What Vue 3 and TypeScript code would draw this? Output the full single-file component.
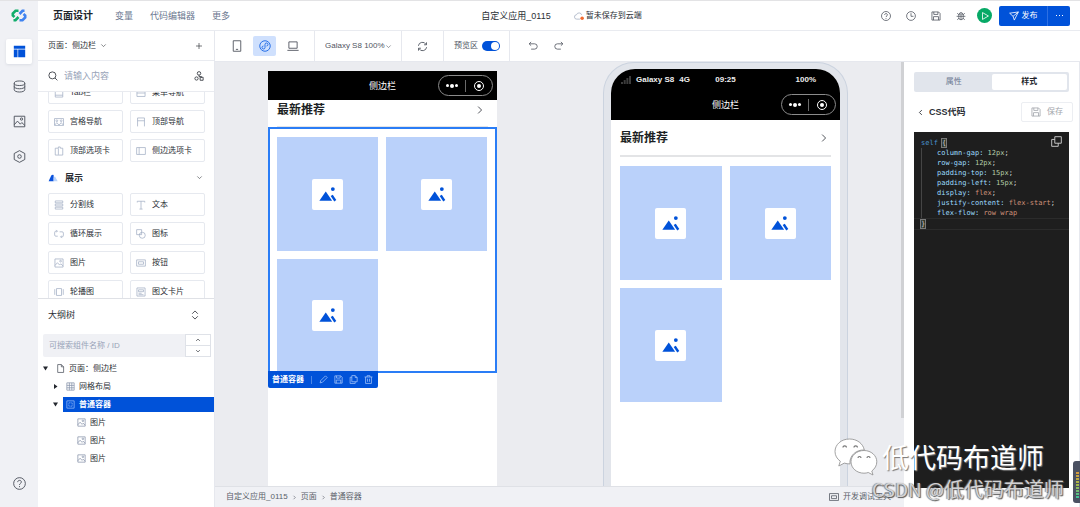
<script setup lang="ts">
import { h, ref } from 'vue'

const icons: Record<string, string> = {
  layout: '<path fill="currentColor" stroke="none" d="M1 1h14v3.6H1zM1 5.400h4.600V15H1zM6.400 5.400H15V15H6.400z"/>',
  database: '<ellipse cx="8" cy="4" rx="6.5" ry="2.8"/><path d="M1.5 4v8c0 1.600 2.900 2.800 6.500 2.800s6.500-1.200 6.500-2.800V4M1.500 8c0 1.600 2.900 2.800 6.500 2.800s6.500-1.200 6.500-2.800"/>',
  image: '<path d="M1.500 1.500h13v13h-13zM1.500 12l4-4.500 3.500 3.800 1.800-2 3.700 3.500"/><circle cx="10.500" cy="5" r="1.400"/>',
  hexagon: '<path d="M8 .8l6.500 3.500v7.400L8 15.200l-6.500-3.500V4.300z"/><circle cx="8" cy="8" r="2.200"/>',
  help: '<circle cx="8" cy="8" r="7.200"/><path d="M5.800 6.300c0-3 4.500-2.800 4.500-.1C10.300 7.800 8 7.900 8 9.700M8 11.200v1.300"/>',
  down: '<path d="M3 5.500l5 5 5-5"/>',
  up: '<path d="M3 10.500l5-5 5 5"/>',
  right: '<path d="M5 2.500L10.500 8 5 13.500"/>',
  left: '<path d="M11 2.500L5.500 8l5.500 5.500"/>',
  plus: '<path d="M8 2v12M2 8h12"/>',
  search: '<circle cx="7" cy="7" r="5.600"/><path d="M11.200 11.200l3.800 3.800"/>',
  nodes: '<circle cx="8" cy="3.800" r="2.800"/><path d="M8 6.600v2.400M8 9h4v1.500"/><circle cx="4" cy="12" r="2.600"/><path d="M9.800 10h4.800v4.800H9.800z"/>',
  tab: '<path d="M2 1.500h12v13H2zM2 11.500h12"/>',
  menu: '<path d="M1.500 2.500h13v11h-13zM1.500 8h13M5 5.200h6"/>',
  grid9: '<path d="M.8 2.500h14.400v11H.8zM1 13l3.500-4L8 13l3.500-4 3.500 4"/><circle cx="4.500" cy="6" r="1.400"/><circle cx="11.500" cy="6" r="1.400"/>',
  topnav: '<path d="M2.500 15V1.500h11V15M2.500 6h11"/>',
  toptabs: '<path d="M2 14.500v-11h5v-2h3v2h4v11zM7 4v10"/>',
  sidetabs: '<path d="M1 2.500h14v11H1zM5 2.500v11"/>',
  lines: '<path d="M2 1.500h12v3H2zM2 6.500h12v3H2zM2 11.500h12v3H2z"/>',
  text: '<path d="M2 4V2h12v2M8 2v12.500M5.500 14.500h5"/>',
  loop: '<path d="M5 3.500H3a2 2 0 0 0-2 2v4a2 2 0 0 0 2 2h3M3.500 1.500l2 2-2 2M11 12.500h2a2 2 0 0 0 2-2v-4a2 2 0 0 0-2-2H9M12.500 10.500l-2 2 2 2"/>',
  shapes: '<path d="M1 1h8v8H1z"/><circle cx="10" cy="10" r="4.800"/>',
  button: '<path d="M1 3h14v10H1zM4 6h8v4H4z"/>',
  carousel: '<path d="M4 2.500h8v11H4zM1.200 3.500v9M14.800 3.500v9"/>',
  card: '<path d="M1.500 1.500h13v13h-13zM4 4.500h8v3H4zM4 10h5M4 12.300h8"/>',
  sort: '<path d="M3.500 6L8 1.500 12.500 6M3.500 10L8 14.500 12.500 10"/>',
  file: '<path d="M3 1h6.500L13.500 5v10H3zM9.500 1v4h4"/>',
  table: '<path d="M1.500 1.500h13v13h-13zM1.500 6h13M1.500 10.300h13M6 1.500v13M10.300 1.500v13"/>',
  container: '<path d="M1.500 1.500h13v13h-13z"/><path stroke-dasharray="2 1" d="M5 5h6v6H5z"/>',
  phone: '<path d="M3 1h10v14H3zM6.500 12.500h3"/>',
  mini: '<circle cx="8" cy="8" r="7"/><path d="M8 10.200a2 2 0 1 1-2-2.200M8 10.200V5.800M8 5.800A2 2 0 1 1 10 8"/>',
  laptop: '<path d="M2.500 2.500h11v8.500h-11zM.5 13.800h15"/>',
  refresh: '<path d="M2 7a6 6 0 0 1 11.200-2M14 9a6 6 0 0 1-11.200 2M13.800 2v3.500h-3.500M2.200 14v-3.500h3.500"/>',
  undo: '<path d="M5 1.500L1.800 4.500 5 7.500M2 4.500h8.500a3.900 3.900 0 0 1 0 8.500H5"/>',
  redo: '<path d="M11 1.500l3.200 3L11 7.500M14 4.500H5.500a3.900 3.900 0 0 0 0 8.500H11"/>',
  clock: '<circle cx="8" cy="8" r="7"/><path d="M8 3.500V8.500h4"/>',
  save: '<path d="M1.500 1.500h10.500l2.500 2.500v10.500h-13zM4.500 1.500V5.500h6.500v-4M4 14.500V9h8v5.500"/>',
  bug: '<path d="M4.500 5h7v5.500a3.500 3.500 0 0 1-7 0zM5.500 5a2.500 2.500 0 0 1 5 0M8 6v8M1 8.500h3.500M11.500 8.500H15M2 3.500L4.500 6M14 3.500L11.500 6M2 14l2.800-2.500M14 14l-2.800-2.500M4.500 8.500h7"/>',
  play: '<path d="M4 2.500l9.500 5.500L4 13.500z"/>',
  send: '<path d="M1 3.500L15 1.500 8.500 14.500 6.500 8.500zM6.500 8.500L15 1.500"/>',
  cloud: '<path d="M9.500 13H4.500a3.500 3.500 0 0 1-.5-7 4.300 4.300 0 0 1 8.300.5"/><circle cx="13" cy="11.500" r="2.800" fill="#f26a2e" stroke="none"/>',
  pen: '<path d="M2 14l1-4 8.500-8.500 3 3L6 13z"/>',
  copy: '<path d="M5 1h6l3.500 3.500V12H5zM11 1v3.500h3.500M5 4H2v11h9v-3"/>',
  trash: '<path d="M1 3.500h14M5.500 3.500V1.200h5v2.300M2.800 3.500V15h10.400V3.500M6.300 6.500v5.500M9.700 6.500v5.500"/>',
  windows: '<path d="M5.500 1H15v9.500H5.500zM5.500 5H1v10h9.500v-4.500"/>',
  devtool: '<path d="M.8 2.500h14.400v11H.8zM4 6h8v4.500H4z"/>',
  picture: '<path fill="currentColor" stroke="none" d="M.3 14L6 5.800 11.700 14z"/><path stroke-width="2.200" d="M11.300 9.200l3.200 4.800"/><circle cx="12.300" cy="3.600" r="1.700" fill="currentColor" stroke="none"/>',
  category: '<path fill="#0a52dc" stroke="none" d="M1 13l4-8.500q1-2 4-1.500v10z"/><path fill="#b9d3fb" stroke="none" d="M9 13V8l2-3 4.500 8z"/>',
}

const Icon = (props: { name: string }) =>
  h('svg', { class: 'icon', viewBox: '0 0 16 16', 'aria-hidden': 'true', innerHTML: icons[props.name] })
Icon.props = ['name']

const topLinks = ['变量', '代码编辑器', '更多']
const headerTools = [
  { icon: 'help', label: '帮助' },
  { icon: 'clock', label: '历史' },
  { icon: 'save', label: '保存' },
  { icon: 'bug', label: '调试' },
]
const navItems = [
  { icon: 'tab', label: 'Tab栏' },
  { icon: 'menu', label: '菜单导航' },
  { icon: 'grid9', label: '宫格导航' },
  { icon: 'topnav', label: '顶部导航' },
  { icon: 'toptabs', label: '顶部选项卡' },
  { icon: 'sidetabs', label: '侧边选项卡' },
]
const displayItems = [
  { icon: 'lines', label: '分割线' },
  { icon: 'text', label: '文本' },
  { icon: 'loop', label: '循环展示' },
  { icon: 'shapes', label: '图标' },
  { icon: 'image', label: '图片' },
  { icon: 'button', label: '按钮' },
  { icon: 'carousel', label: '轮播图' },
  { icon: 'card', label: '图文卡片' },
]
const tree = [
  { icon: 'file', label: '页面：侧边栏', level: 0, caret: 'open' },
  { icon: 'table', label: '网格布局', level: 1, caret: 'closed' },
  { icon: 'container', label: '普通容器', level: 1, caret: 'open' },
  { icon: 'image', label: '图片', level: 2, caret: '' },
  { icon: 'image', label: '图片', level: 2, caret: '' },
  { icon: 'image', label: '图片', level: 2, caret: '' },
]
const selected = ref(2)
const preview = ref(true)
const tab = ref('样式')
const rules = [
  { prop: 'column-gap', value: '12px', kind: 'num', end: ';' },
  { prop: 'row-gap', value: '12px', kind: 'num', end: ';' },
  { prop: 'padding-top', value: '15px', kind: 'num', end: ';' },
  { prop: 'padding-left', value: '15px', kind: 'num', end: ';' },
  { prop: 'display', value: 'flex', kind: 'word', end: ';' },
  { prop: 'justify-content', value: 'flex-start', kind: 'word', end: ';' },
  { prop: 'flex-flow', value: 'row wrap', kind: 'word', end: '' },
]
</script>

<template>
  <div class="app">
    <nav class="rail" aria-label="主导航">
      <svg class="logo" viewBox="0 0 16 13" aria-hidden="true">
        <path fill="none" stroke="#10ad6b" stroke-width="2.600" d="M7.500 1.800H4.500L1.800 4.500v2L3.500 8M2.500 11.200h2L7.500 8" />
        <path fill="none" stroke="#3f83f0" stroke-width="2.600" d="M8.500 11.200h3L14.200 8.500v-2L12.500 5M13.500 1.800h-2L8.500 5" />
      </svg>
      <button class="rail-btn active" aria-label="页面"><Icon name="layout" /></button>
      <button class="rail-btn" aria-label="数据"><Icon name="database" /></button>
      <button class="rail-btn" aria-label="素材"><Icon name="image" /></button>
      <button class="rail-btn" aria-label="设置"><Icon name="hexagon" /></button>
      <button class="rail-btn last" aria-label="帮助"><Icon name="help" /></button>
    </nav>

    <div class="main">
      <header class="topbar">
        <div class="top-left">
          <h1>页面设计</h1>
          <a v-for="l in topLinks" :key="l" href="#">{{ l }}</a>
        </div>
        <div class="top-mid">
          <span class="app-name">自定义应用_0115</span>
          <span class="cloud"><Icon name="cloud" />暂未保存到云端</span>
        </div>
        <div class="top-right">
          <button v-for="t in headerTools" :key="t.icon" class="tool" :aria-label="t.label"><Icon :name="t.icon" /></button>
          <button class="run" aria-label="预览"><Icon name="play" /></button>
          <div class="publish">
            <button class="pub"><Icon name="send" />发布</button>
            <button class="pub-more" aria-label="更多操作"><i></i><i></i><i></i></button>
          </div>
        </div>
      </header>

      <div class="body">
        <aside class="left">
          <div class="page-row">
            <label class="page-pick">
              <select aria-label="当前页面"><option>页面：侧边栏</option></select>
              <Icon name="down" />
            </label>
            <button aria-label="新建页面"><Icon name="plus" /></button>
          </div>
          <div class="search-row">
            <Icon name="search" />
            <input type="text" placeholder="请输入内容" aria-label="搜索组件" />
            <button aria-label="组件分类"><Icon name="nodes" /></button>
          </div>
          <div class="components">
            <div class="items scrolled">
              <button v-for="c in navItems" :key="c.label" class="item"><Icon :name="c.icon" />{{ c.label }}</button>
            </div>
            <button class="group"><Icon name="category" /><span>展示</span><Icon name="down" /></button>
            <div class="items">
              <button v-for="c in displayItems" :key="c.label" class="item"><Icon :name="c.icon" />{{ c.label }}</button>
            </div>
          </div>
          <section class="outline">
            <div class="outline-head">
              <h2>大纲树</h2>
              <button aria-label="展开"><Icon name="sort" /></button>
            </div>
            <div class="outline-search">
              <input type="text" placeholder="可搜索组件名称 / ID" aria-label="搜索组件名称" />
              <div class="stepper">
                <button aria-label="上一个"><Icon name="up" /></button>
                <button aria-label="下一个"><Icon name="down" /></button>
              </div>
            </div>
            <ul class="tree">
              <li v-for="(n, i) in tree" :key="i" :class="'level-' + n.level">
                <span class="caret" :class="n.caret"></span>
                <button :class="{ selected: i === selected }" @click="selected = i"><Icon :name="n.icon" />{{ n.label }}</button>
              </li>
            </ul>
          </section>
        </aside>

        <div class="work">
          <div class="toolbar">
            <div class="cell devices">
              <button aria-label="手机"><Icon name="phone" /></button>
              <button class="on" aria-label="小程序"><Icon name="mini" /></button>
              <button aria-label="电脑"><Icon name="laptop" /></button>
            </div>
            <div class="cell">
              <label class="device-pick">
                <select aria-label="设备"><option>Galaxy S8 100%</option></select>
                <Icon name="down" />
              </label>
            </div>
            <div class="cell refresh"><button aria-label="刷新"><Icon name="refresh" /></button></div>
            <div class="cell">
              <label class="switch">预览区<input v-model="preview" type="checkbox" role="switch" /></label>
            </div>
            <div class="history">
              <button aria-label="撤销"><Icon name="undo" /></button>
              <button aria-label="重做"><Icon name="redo" /></button>
            </div>
          </div>

          <div class="split">
            <div class="center">
              <div class="canvas">
                <div class="stage">
                  <div class="device">
                    <div class="title-bar">
                      <span>侧边栏</span>
                      <div class="capsule"><b class="dots"><i></i><i></i><i></i></b><b class="target"></b></div>
                    </div>
                    <div class="heading tight"><h3>最新推荐</h3><Icon name="right" /></div>
                    <div class="tiles picked">
                      <div v-for="n in 3" :key="n" class="tile"><span><Icon name="picture" /></span></div>
                      <div class="picked-bar">
                        <strong>普通容器</strong>
                        <button aria-label="编辑"><Icon name="pen" /></button>
                        <button aria-label="保存"><Icon name="save" /></button>
                        <button aria-label="复制"><Icon name="copy" /></button>
                        <button aria-label="删除"><Icon name="trash" /></button>
                      </div>
                    </div>
                  </div>

                  <div v-if="preview" class="frame">
                    <div class="device rounded">
                      <div class="status">
                        <span class="carrier">
                          <svg class="signal" viewBox="0 0 10 8" aria-hidden="true"><path fill="#3c3c3c" d="M0 6h2v2H0zM2.700 4h2v4h-2zM5.400 2h2v6h-2zM8 0h2v8H8z" /></svg>
                          <span>Galaxy S8</span><span>4G</span>
                        </span>
                        <span>09:25</span>
                        <span class="battery">100%</span>
                      </div>
                      <div class="title-bar">
                        <span>侧边栏</span>
                        <div class="capsule"><b class="dots"><i></i><i></i><i></i></b><b class="target"></b></div>
                      </div>
                      <div class="heading"><h3>最新推荐</h3><Icon name="right" /></div>
                      <div class="tiles">
                        <div v-for="n in 3" :key="n" class="tile"><span><Icon name="picture" /></span></div>
                      </div>
                    </div>
                  </div>
                </div>
                <div class="scrollbar"></div>
              </div>
              <footer class="footer">
                <nav class="crumbs" aria-label="路径">
                  <a href="#">自定义应用_0115</a><Icon name="right" /><a href="#">页面</a><Icon name="right" /><a href="#">普通容器</a>
                </nav>
                <button class="dev"><Icon name="devtool" />开发调试工具</button>
              </footer>
            </div>

            <aside class="right">
              <div class="tabs" role="tablist">
                <button v-for="t in ['属性', '样式']" :key="t" role="tab" :aria-selected="tab === t" :class="{ on: tab === t }" @click="tab = t">{{ t }}</button>
              </div>
              <div class="css-head">
                <button class="back"><Icon name="left" />CSS代码</button>
                <button class="save" disabled><Icon name="save" />保存</button>
              </div>
              <div class="editor">
                <pre><code><span class="line"><span class="sel">self</span> <span class="brace">{</span></span><span v-for="r in rules" :key="r.prop" class="line rule"><span class="prop">{{ r.prop }}:</span> <span :class="r.kind">{{ r.value }}</span>{{ r.end }}</span><span class="line current"><span class="brace">}</span></span></code></pre>
                <button class="copy" aria-label="复制代码"><Icon name="windows" /></button>
              </div>
            </aside>
          </div>
        </div>
      </div>
    </div>

    <div class="watermark">
      <div class="mark-main">
        <svg viewBox="0 0 44 38" aria-hidden="true">
          <path fill="#fff" stroke="#8c8c8c" stroke-width=".8" d="M15.500 1C7.200 1 1 6.600 1 13.500c0 4 2 7.300 5.300 9.700L4.800 28l5.500-2.900c2 .6 3.700.9 5.700.8C15 18 22 11.500 30.300 12 29 5.500 23 1 15.500 1z" />
          <path fill="#fff" stroke="#8c8c8c" stroke-width=".8" d="M30 12.500c-7.200 0-13 5-13 11.300s5.800 11.400 13 11.400c1.500 0 3-.3 4.300-.7l4.700 2.500-1.200-4c3-2.200 5-5.500 5-9.200 0-6.300-5.700-11.300-12.800-11.300z" />
          <path fill="none" stroke="#777" stroke-width="1.200" d="M9 9.500a1.700 1.700 0 1 1 3.400 0M20 9.500a1.700 1.700 0 1 1 3.400 0M24 20a1.500 1.500 0 1 1 3 0M33 20a1.500 1.500 0 1 1 3 0" />
        </svg>
        <span>低代码布道师</span>
      </div>
      <div class="mark-sub"><small>CSDN @</small>低代码布道师</div>
    </div>
    <div class="meter"><span></span></div>
  </div>
</template>

<style>
body {
  background: #fff;
}
</style>

<style scoped>
.app {
  position: relative;
  display: flex;
  box-sizing: border-box;
  height: 100vh;
  overflow: hidden;
  border-top: 1px solid #e3e3e5;
  background: #fff;
  color: #2b2f36;
  font: 8px/12px "Liberation Sans", "Noto Sans CJK SC", sans-serif;
}
.app *, .app *::before, .app *::after { box-sizing: border-box; }
button, input, select {
  margin: 0;
  padding: 0;
  border: 0;
  background: none;
  color: inherit;
  font: inherit;
}
button { display: flex; align-items: center; justify-content: center; cursor: pointer; }
select { appearance: none; cursor: pointer; }
input { min-width: 0; outline: none; }
input::placeholder { color: #98a3b8; opacity: 1; }
a { color: inherit; text-decoration: none; }
h1, h2, h3, ul, pre { margin: 0; padding: 0; }
.icon {
  width: 10px;
  height: 10px;
  flex: none;
  fill: none;
  stroke: currentColor;
  stroke-width: 1.3;
}

.rail {
  display: flex;
  flex-direction: column;
  align-items: center;
  gap: 10px;
  flex: none;
  width: 38px;
  padding: 8px 0 11px;
  background: #f0f1f5;
}
.logo { width: 16px; height: 13px; margin-bottom: 7px; }
.rail-btn { width: 26px; height: 25px; border-radius: 2px; color: #464b55; }
.rail-btn .icon { width: 13px; height: 13px; stroke-width: 1.1; }
.rail-btn.active { background: #fff; color: #0052d9; box-shadow: 0 1px 3px #d9dce3; }
.rail-btn.last { margin-top: auto; }

.main { display: flex; flex-direction: column; flex: 1; min-width: 0; }
.topbar {
  display: grid;
  grid-template-columns: 1fr auto 1fr;
  align-items: center;
  height: 30px;
  padding: 0 10px 0 15px;
  border-bottom: 1px solid #e9ebf0;
}
.top-left { display: flex; align-items: center; gap: 17px; color: #6b7890; font-size: 9px; }
.top-left h1 { margin-right: 5px; color: #20242b; font-size: 10px; font-weight: 700; }
.top-mid { display: flex; align-items: center; gap: 23px; }
.app-name { font-size: 9px; }
.cloud { display: flex; align-items: center; gap: 2px; }
.cloud .icon { color: #9aa6ba; stroke-width: 1.1; }
.top-right { display: flex; align-items: center; justify-content: flex-end; gap: 15px; }
.tool { color: #4a4f59; }
.tool .icon { stroke-width: 1.2; }
.run { width: 15px; height: 15px; margin-left: -4px; border-radius: 50%; background: #07a966; color: #fff; }
.publish { display: flex; height: 20px; margin-left: -8px; overflow: hidden; border-radius: 2px; background: #0052d9; color: #fff; }
.pub { gap: 3px; width: 48px; }
.pub-more { gap: 2px; width: 23px; border-left: 1px solid #2d70e3; }
.pub-more i { width: 1px; height: 1px; background: #fff; }

.body { display: flex; flex: 1; min-height: 0; }
.left { display: flex; flex-direction: column; flex: none; width: 177px; border-right: 1px solid #e6e8ee; }
.page-row, .search-row {
  display: flex;
  align-items: center;
  justify-content: space-between;
  flex: none;
  height: 30px;
  padding: 0 10px;
  border-bottom: 1px solid #e9ebf0;
}
.page-pick { display: flex; align-items: center; gap: 4px; }
.page-pick .icon { width: 7px; height: 7px; }
.page-row button { width: 10px; }
.page-row button .icon { width: 8px; height: 8px; }
.search-row { height: 31px; gap: 6px; }
.search-row input { flex: 1; font-size: 9px; }
.components { height: 207px; flex: none; overflow: hidden; padding: 0 9px 0 10px; border-bottom: 1px solid #dfe1e6; }
.items { display: grid; grid-template-columns: 1fr 1fr; gap: 6px 7px; }
.items.scrolled { margin-top: -11px; }
.item { justify-content: flex-start; gap: 6px; height: 23px; padding-left: 5px; border: 1px solid #e6e9ef; border-radius: 2px; }
.item .icon { color: #a3afc4; stroke-width: 1.2; }
.group { gap: 7px; width: 100%; height: 31px; font-size: 9px; font-weight: 700; }
.group span { flex: 1; text-align: left; }
.group .icon:last-child { width: 7px; height: 7px; margin-right: 2px; }
.outline { flex: 1; min-height: 0; padding: 0 3px 0 5px; }
.outline-head { display: flex; align-items: center; justify-content: space-between; height: 31px; padding: 0 11px 0 5px; }
.outline-head h2 { font-size: 9px; font-weight: 400; }
.outline-search { display: flex; height: 23px; margin-top: 4px; border-radius: 2px; background: #f0f1f5; }
.outline-search input { flex: 1; padding-left: 6px; }
.stepper { display: grid; width: 26px; border: 1px solid #dfe2e8; background: #fff; }
.stepper button + button { border-top: 1px solid #dfe2e8; }
.stepper .icon { width: 6px; height: 6px; stroke-width: 1.8; }
.tree { display: flex; flex-direction: column; gap: 3px; margin: 4px -3px 0 0; list-style: none; }
.tree li { display: flex; align-items: center; gap: 2px; height: 15px; }
.tree .level-1 { padding-left: 10px; }
.tree .level-2 { padding-left: 24px; }
.tree button { justify-content: flex-start; flex: 1; gap: 4px; height: 15px; padding-left: 3px; }
.tree button .icon { width: 9px; height: 9px; color: #8592a8; }
.tree .level-0 button { padding-left: 6px; }
.tree .level-0 .icon { color: #4a505b; }
.tree .selected { background: #0052d9; color: #fff; font-weight: 700; }
.tree .selected .icon { color: #9bc0fa; }
.caret { width: 5px; height: 5px; flex: none; background: #23272e; visibility: hidden; }
.caret.open { visibility: visible; clip-path: polygon(0 10%, 100% 10%, 50% 90%); }
.caret.closed { visibility: visible; clip-path: polygon(20% 0, 90% 50%, 20% 100%); }
.level-1 .caret { margin-right: 3px; }

.work { display: flex; flex-direction: column; flex: 1; min-width: 0; }
.toolbar { display: flex; flex: none; height: 31px; border-bottom: 1px solid #e6e8ee; color: #50555f; }
.cell { display: flex; align-items: center; padding: 0 9px 0 10px; border-right: 1px solid #e6e8ee; }
.devices { gap: 5px; padding-right: 10px; }
.devices button { width: 23px; height: 20px; border-radius: 2px; }
.devices .on { background: #cfe0fd; color: #1664e5; }
.devices .icon { width: 12px; height: 12px; stroke-width: 1.2; }
.refresh { padding: 0 15px; }
.refresh .icon { width: 11px; height: 11px; }
.device-pick { display: flex; align-items: center; }
.device-pick .icon { width: 7px; height: 7px; }
.switch { display: flex; align-items: center; gap: 4px; }
.switch input { display: flex; appearance: none; width: 18px; height: 10px; padding: 1px; border-radius: 5px; background: #b9c0cc; cursor: pointer; }
.switch input::before { content: ""; width: 8px; height: 8px; border-radius: 50%; background: #fff; }
.switch input:checked { justify-content: flex-end; background: #0052d9; }
.history { display: flex; align-items: center; gap: 16px; padding: 0 18px; }
.split { display: flex; flex: 1; min-height: 0; }
.center { display: flex; flex-direction: column; flex: 1; min-width: 0; }
.canvas { display: flex; flex: 1; min-height: 0; background: #ebecf0; }
.stage { display: flex; flex: 1; justify-content: space-around; overflow: hidden; }
.scrollbar { width: 3px; height: 84%; background: #d0d1d4; }
.device { width: 229px; height: 100%; margin-top: 9px; background: #fff; }
.frame { width: 245px; padding: 6px 7px 0; border: 1px solid #cbd3df; border-bottom: 0; border-radius: 31px 31px 0 0; background: #e2e5eb; }
.device.rounded { margin-top: 0; overflow: hidden; border-radius: 24px 24px 0 0; }
.title-bar { position: relative; display: flex; align-items: center; justify-content: center; height: 29px; background: #000; color: #fff; font-size: 9px; }
.capsule { position: absolute; top: 4px; right: 4px; display: flex; align-items: center; width: 55px; height: 21px; border: 1px solid #8b8b8b; border-radius: 11px; }
.dots { display: flex; align-items: center; justify-content: center; gap: 1px; width: 27px; height: 12px; border-right: 1px solid #6a6a6a; }
.dots i { width: 3px; height: 3px; border-radius: 50%; background: #fff; }
.dots i:nth-child(2) { width: 4px; height: 4px; }
.target { display: grid; place-items: center; width: 10px; height: 10px; margin-left: 8px; border: 1px solid #fff; border-radius: 50%; }
.target::before { content: ""; width: 4px; height: 4px; border-radius: 50%; background: #fff; }
.status { display: grid; grid-template-columns: 1fr auto 1fr; align-items: center; height: 21px; padding: 0 24px; background: #000; color: #eee; font-weight: 700; }
.carrier { display: flex; align-items: center; gap: 5px; margin-left: -14px; white-space: nowrap; }
.signal { width: 10px; height: 8px; }
.battery { text-align: right; }
.rounded .title-bar { height: 30px; }
.heading { display: flex; align-items: center; justify-content: space-between; height: 37px; margin: 0 9px; padding-right: 2px; border-bottom: 2px solid #e3e4e6; }
.heading.tight { height: 27px; padding-right: 3px; padding-bottom: 7px; border-bottom-width: 1px; }
.heading h3 { color: #1c1f24; font-size: 12px; line-height: 16px; font-weight: 700; }
.tiles { display: grid; grid-template-columns: 1fr 1fr; gap: 8px; padding: 9px; }
.tile { display: grid; place-items: center; height: 114px; background: #bad1fa; }
.tile span { display: grid; place-items: center; width: 31px; height: 31px; border-radius: 2px; background: #fff; color: #0052d9; }
.tile .icon { width: 18px; height: 18px; }
.picked { position: relative; height: 246px; padding: 8px 8px 0 7px; border: 2px solid #2a7df6; align-content: start; }
.picked .tile:nth-child(3) { height: 112px; }
.picked-bar { position: absolute; left: -2px; top: 242px; display: flex; align-items: center; gap: 6px; width: 110px; height: 17px; padding: 0 5px 0 4px; border-radius: 0 0 2px 2px; background: #0052d9; color: #fff; }
.picked-bar strong { margin-right: auto; padding-right: 7px; border-right: 1px solid #4b86e6; line-height: 8px; }
.picked-bar .icon { width: 9px; height: 9px; color: #a9c8fb; }
.footer { display: flex; align-items: center; justify-content: space-between; flex: none; height: 21px; padding: 0 13px 0 11px; border-top: 1px solid #dfe1e6; background: #f0f1f5; color: #5a5f69; }
.crumbs { display: flex; align-items: center; gap: 4px; }
.crumbs .icon { width: 5px; height: 5px; stroke-width: 2; }
.dev { gap: 4px; }

.right { display: flex; flex-direction: column; flex: none; width: 176px; border-right: 1px solid #e6e8ee; }
.tabs { display: grid; grid-template-columns: 1fr 1fr; height: 20px; margin: 10px 10px 0; padding: 2px; border-radius: 2px; background: #e1e5ec; color: #6b7890; }
.tabs .on { border-radius: 2px; background: #fff; color: #20242b; font-weight: 700; }
.css-head { display: flex; align-items: center; justify-content: space-between; height: 20px; margin: 10px 6px 10px 13px; }
.back { gap: 5px; font-size: 9px; font-weight: 700; }
.back .icon { width: 7px; height: 7px; stroke-width: 2; }
.save { gap: 6px; width: 52px; height: 20px; border: 1px solid #eceef2; border-radius: 2px; color: #a3a6ac; }
.editor { position: relative; flex: 1; margin: 0 10px 19px; padding-top: 6px; background: #1e1e1e; color: #d4d4d4; font: 7px/10px "DejaVu Sans Mono", monospace; }
pre, code { font: inherit; }
.line { display: block; padding-left: 7px; }
.rule { padding-left: 23px; background: linear-gradient(#454545, #454545) 7px 0 / 1px 100% no-repeat; }
.current { border-top: 1px solid #2b2b2b; border-bottom: 1px solid #2b2b2b; }
.sel { color: #4a93cf; }
.prop { color: #9cdcfe; }
.num { color: #b5cea8; }
.word { color: #ce9178; }
.brace { outline: 1px solid #7a7a7a; background: #30382f; }
.copy { position: absolute; top: 4px; right: 7px; }
.copy .icon { width: 11px; height: 11px; }

.watermark { position: absolute; right: 16px; bottom: 5px; pointer-events: none; color: #fff; font-family: "Noto Sans CJK SC", sans-serif; }
.mark-main { display: flex; align-items: center; justify-content: flex-end; gap: 4px; margin-right: 20px; font-size: 27px; line-height: 34px; text-shadow: 1px 1px 1px #777; }
.mark-main svg { width: 44px; height: 38px; }
.mark-sub { color: #d2d2d4; font-size: 20px; line-height: 26px; text-align: right; text-shadow: 1px 1px 1px #555, -1px 0 1px #888; }
.mark-sub small { font-size: 19px; }
.meter { position: absolute; right: 0; bottom: 4px; width: 7px; height: 42px; padding: 11px 1px 4px 3px; border-radius: 3px 0 0 3px; background: #4b5162; }
.meter span { display: block; height: 100%; background: repeating-linear-gradient(transparent 0 2px, #4b5162 2px 3px), linear-gradient(#d99a3c, #a9b84a 45%, #35c2a0); }
</style>
